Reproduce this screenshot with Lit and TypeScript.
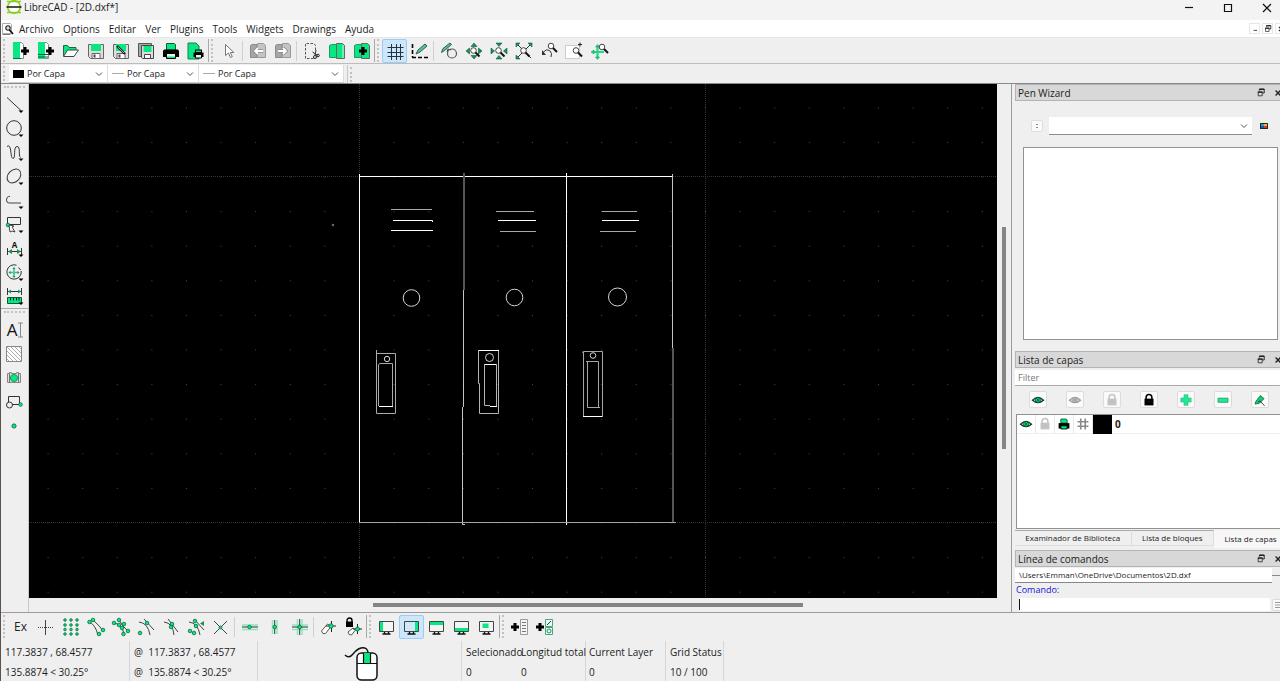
import { LitElement, html, svg, css, nothing } from "lit";
import { customElement, property } from "lit/decorators.js";
import { classMap } from "lit/directives/class-map.js";

const G = "#08e882";
const N = "#14925a";

const dot = (x: number, y: number, r = 1.8) =>
  svg`<circle cx=${x} cy=${y} r=${r} fill=${G} stroke="#0b6b40" stroke-width=".8"/>`;
const lens = (x: number, y: number) => svg`
  <circle cx=${x} cy=${y} r="2.8" fill="#fff" stroke="#444" stroke-width="1"/>
  <path d=${`M${x + 2} ${y + 2}l4 4`} stroke="#111" stroke-width="2"/>`;
const plus = (x: number, y: number) =>
  svg`<path d=${`M${x - 4} ${y}h8M${x} ${y - 4}v8`} stroke="#000" stroke-width="3"/>`;
const more = svg`<path d="M14.5 16.5h5l-2.5 2.6z" fill="#000"/>`;
const screen = (part: unknown) => svg`
  <path d="M2.5 4.500h14v10h-14z" fill="#f4f4f4" stroke="#444"/>${part}
  <path d="M7.500 15v2M11.500 15v2M5.500 17h8" stroke="#111" stroke-width="1.400"/>`;
const floppy = svg`
  <path d="M2.5 3.5h15v14h-13l-2-2z" fill="#ddd" stroke="#666"/>
  <path d="M5 3h10v7H5z" fill="${G}"/><path d="M6 12.5h8v5H6z" fill="#fff" stroke="#666"/>
  <path d="M7.5 13.5h2v3h-2z" fill="#444"/>`;
const printer = svg`
  <path d="M5.500 2.500h8l1 1V9h-9z" fill="${G}" stroke="#0b5c38"/>
  <path d="M3 8.500h14l1 1.500v6H2v-6z" fill="#000"/>
  <path d="M5.500 12.500h9v5h-9z" fill="#eee" stroke="#000"/><path d="M6 15.500h8v1.500H6z" fill="${G}"/>`;
const padlock = (c: string, hole: string) => svg`
  <path d="M6.8 9V7.2a3.2 3.2 0 0 1 6.4 0V9" fill="none" stroke=${c} stroke-width="1.7"/>
  <path d="M5 8.5h10V16H5z" fill=${c}/><path d="M7 12h6" stroke=${hole} stroke-width=".6"/>`;
const eye = (c: string, iris: string) => svg`
  <path d="M4 10.2Q10 4.4 16 10.2Q10 15.4 4 10.2z" fill="#fff" stroke=${c} stroke-width="1.6"/>
  <circle cx="10" cy="10" r="2.7" fill=${iris} stroke=${c} stroke-width="1"/><circle cx="10" cy="10" r="1" fill=${c}/>`;
const moveBlock = (d: string) => svg`
  <path d="M2.500 4.500l1.500-1h5v13h-6.500z" fill="#a6a6a6" stroke="#8c8c8c"/>
  <path d="M9.500 2.500h6l2 2v12h-8z" fill="#c4c4c4" stroke="#9a9a9a"/>
  <path d=${d} fill="none" stroke="#8a8a8a" stroke-width="3.400"/>
  <path d=${d} fill="none" stroke="#fff" stroke-width="1.800"/>`;

const ICONS: Record<string, unknown> = {
  newFile: svg`<path d="M2.500 1.500h8l2 2v14h-10z" fill="#fff" stroke="#888"/><path d="M2 1h7v17H2z" fill="${G}"/><path d="M2 17.500h8" stroke="#087544"/>${plus(14, 10)}`,
  newTemplate: svg`<path d="M2.500 1.500h8l2 2v14h-10z" fill="#fff" stroke="#888"/><path d="M2 1h7v17H2z" fill="${G}"/><path d="M2 13.500h10M2 16h10" stroke="#075c37"/>${plus(14, 10)}`,
  open: svg`<path d="M2.500 15V4.500h4l1.500 2h7v3" fill="${G}" stroke="#176b48"/><path d="M2.500 15.500l4-6.500h11l-4.500 6.500z" fill="#fff" stroke="#444"/>`,
  save: floppy,
  saveAs: svg`${floppy}<path d="M6 5l8 8" stroke="#222" stroke-width="2.400"/><path d="M7 6l6 6" stroke="#ddd" stroke-width=".7"/>`,
  saveAll: svg`<path d="M2.500 2.500h13v13h-13z" fill="#aaa" stroke="#555"/><path d="M5.500 4.500h12v13h-11l-1-1z" fill="#ddd" stroke="#444"/><path d="M7.500 5h8v6h-8z" fill="${G}"/><path d="M8.500 13.500h6v4h-6z" fill="#fff" stroke="#444"/>`,
  print: printer,
  preview: svg`<path d="M2 2h8l3 3v13H2z" fill="${G}" stroke="#1a7a50"/><path d="M9 8.500h7v3H9zM7.500 11.500h10V16h-10z" fill="#000"/><path d="M10 9.500h5v1.500h-5z" fill="${G}"/><path d="M9.500 13.500h6v3.500h-6z" fill="#eee" stroke="#000"/>`,
  pointer: svg`<path d="M6.500 3.500v11l3-2.500 2 4.500 1.800-.8-2-4.200h3.600z" fill="#fff" stroke="#777"/>`,
  prev: moveBlock("M15 10H7M10 7l-3 3 3 3"),
  next: moveBlock("M5 10h8M10 7l3 3-3 3"),
  cut: svg`<path d="M13.500 9V4.500l-1.500-2H3.500v15h8" fill="none" stroke="#555" stroke-dasharray="2.500 1.500"/><path d="M14 9l-1 5M10.500 11l5 3.500" stroke="#333"/><circle cx="13" cy="16" r="1.500" fill="none" stroke="#222"/><circle cx="16" cy="14.500" r="1.300" fill="none" stroke="#222"/>`,
  copy: svg`<path d="M2.500 4.500l2-1h5v13h-7z" fill="${G}" stroke="#1c9b62"/><path d="M9.500 2.500h6l2 2v13h-8z" fill="${G}" stroke="#666"/><path d="M16 4v13" stroke="#c9f9e2"/>`,
  paste: svg`<path d="M2.500 4.500l2-1h5v13h-7z" fill="${G}" stroke="#1c9b62"/><path d="M9.500 2.500h6l2 2v13h-8z" fill="${G}" stroke="#666"/>${plus(11, 10)}`,
  grid: svg`<path d="M2.500 6.500h16M2.500 11.500h16M2.500 15.500h16M6.500 3v16M11.500 3v16M15.500 3v16" stroke="#28323a"/>`,
  draft: svg`<path d="M2.500 3v13" stroke="#000" stroke-width="1.600" stroke-dasharray="4 2"/><path d="M2 16.500h16" stroke="#000" stroke-width="1.600" stroke-dasharray="4 2"/><path d="M6 13l2-4 7-6 2 2-7 6z" fill="#54c795" stroke="#355"/>`,
  redraw: svg`<path d="M2.500 11.500l1.500-4 7-5.500 1.500 1.500-7 6z" fill="#54c795" stroke="#355"/><circle cx="13" cy="12.500" r="4.500" fill="none" stroke="#555" stroke-width="1.200"/><path d="M8 11l1-3 3 1" fill="none" stroke="#444"/>`,
  zoomIn: svg`<path d="M7 5.500L10 2l3 3.500zM7 14.500l3 3.500 3-3.500zM5.500 7L2 10l3.500 3zM14.500 7l3.500 3-3.500 3z" fill="${N}" stroke="#0b5c38" stroke-width=".6"/>${lens(9.5, 9.5)}`,
  zoomOut: svg`<path d="M7 2l3 3.500L13 2zM7 18l3-3.500 3 3.500zM2 7l3.500 3L2 13zM18 7l-3.500 3 3.500 3z" fill="${N}" stroke="#0b5c38" stroke-width=".6"/>${lens(9.5, 9.5)}`,
  zoomAuto: svg`<path d="M3 3l14 14M17 3L3 17" stroke="#333"/><path d="M2 6V2h4zM18 6V2h-4zM2 14v4h4z" fill="${N}" stroke="#0b5c38" stroke-width=".6"/>${lens(9.5, 9.5)}`,
  zoomPrev: svg`<path d="M4 12Q7 7 11 10q2.500 2 1 6" fill="none" stroke="#333"/><path d="M3 9v5h4z" fill="#333"/>${lens(12, 5)}`,
  zoomWin: svg`<path d="M1.500 4.500h14v13h-14z" fill="#fff" stroke="#ccc"/><path d="M14 3.500h4M16 1.500v4" stroke="#222"/>${lens(12, 9.5)}`,
  pan: svg`<path d="M3 11h12M8.500 5v12" stroke="#22d884" stroke-width="2.200"/><path d="M6.500 6l2-2.500 2 2.500zM6.500 16l2 2.500 2-2.500zM5 9l-3 2 3 2z" fill="#22d884" stroke="${N}" stroke-width=".5"/>${lens(13, 6)}`,

  line: svg`<path d="M3 3.500L17.500 17" stroke="#333" fill="none"/>${more}`,
  circle: svg`<circle cx="10" cy="10" r="7.300" fill="none" stroke="#333"/>${more}`,
  curve: svg`<path d="M3 4.500c5-4 3 12 6 12s0-12 4-12 1 9 3.500 11" fill="none" stroke="#333"/>${more}`,
  ellipse: svg`<ellipse cx="10" cy="10" rx="7.800" ry="5.800" transform="rotate(-45 10 10)" fill="none" stroke="#333"/>${more}`,
  polyline: svg`<path d="M6 6.500H4.500Q2.500 7 2.500 10t2.500 3H17" fill="none" stroke="#444"/>${more}`,
  select: svg`<path d="M3.500 3.500h13v7h-13z" fill="none" stroke="#333"/>${dot(4, 11)}<path d="M5 11l1 7 2-1 3 1-3-5 2-1z" fill="#fff" stroke="#444"/>${more}`,
  dim: svg`<path d="M3.500 10v7M17.500 10v7M4 13.500h13" stroke="#333"/><path d="M8 11l-4 2.500 4 2.500zM13 11l4 2.500-4 2.500z" fill="${N}"/><text x="10.500" y="10" font-size="8" font-weight="700" text-anchor="middle" fill="#111">A</text>${more}`,
  rotate: svg`<path d="M12.500 3.200A7.200 7.200 0 1 0 17.200 9M14.500 5.500l2.200 2.500" fill="none" stroke="#333"/><path d="M5.500 10.500h9M10 6v9" stroke="#3dc98d" stroke-width="1.600"/><path d="M8.500 7l1.500-2 1.500 2zM8.500 14l1.500 2 1.500-2zM6.500 9l-2 1.500 2 1.500zM13.500 9l2 1.500-2 1.500z" fill="${N}"/>${more}`,
  measure: svg`<path d="M3.500 2v7M17.500 2v7M4 5.500h13" stroke="#333"/><path d="M7 3.500l-3 2 3 2zM14 3.500l3 2-3 2z" fill="${N}"/><path d="M3.500 11.500h14v6h-14z" fill="${G}" stroke="#14563a"/><path d="M6.500 12v2.500M9.500 12v2.500M12.500 12v2.500M15 12v2.500" stroke="#111"/>${more}`,
  text: svg`<path d="M14 3h5M16.500 3v14M14 17h5" stroke="#888" fill="none"/><text x="8" y="16" font-size="17" text-anchor="middle" fill="#111">A</text>`,
  hatch: svg`<path d="M2.500 2.500h15v15h-15z" fill="#fff" stroke="#888"/><path d="M3 3l14 14M7 3l10 10M11 3l6 6M15 3l2 2M3 7l10 10M3 11l6 6M3 15l2 2" stroke="#999" stroke-width=".8"/>`,
  image: svg`<path d="M3.500 5.500h2v-1h2v1h5v-1h2v1h2v9h-13z" fill="#ddd" stroke="#888"/><path d="M5.500 5v10M14.500 5v10" stroke="#777"/><circle cx="10" cy="10" r="3.600" fill="${G}" stroke="#139c60"/>`,
  block: svg`<path d="M4.500 10V4.500h11V11M8 12.500h7" fill="none" stroke="#333"/><circle cx="5.500" cy="13" r="3" fill="#eee" stroke="#333"/>${dot(16.5, 12.5)}`,
  point: svg`<circle cx="10" cy="10" r="2.100" fill="${G}" stroke="#0b7a48"/>`,

  free: svg`<path d="M9.500 3v15" stroke="#444"/><path d="M2 10.500h15" stroke="#444" stroke-dasharray="1 1"/>`,
  snapGrid: svg`${[4, 10, 16].map((x) => [3, 8, 12.5, 17].map((y) => dot(x, y, 1.3)))}`,
  snapEnd: svg`<path d="M3 5q6 2 9 13M7 3q7 6 10 11" fill="none" stroke="#444"/>${dot(3.5, 5)}${dot(7, 3)}${dot(13, 17)}${dot(17, 13)}`,
  snapOn: svg`<path d="M3 6q8 1 10 11M8 3q3 6 9 11" fill="none" stroke="#444"/>${dot(3, 6)}${dot(8, 3)}${dot(8, 8)}${dot(11, 11)}${dot(13, 7)}${dot(12.5, 17)}${dot(17, 14)}`,
  snapCenter: svg`<path d="M3 5q9 1 11 13M8 2l10 11" fill="none" stroke="#444"/>${dot(11, 6)}${dot(4, 16)}`,
  snapMid: svg`<path d="M3 5q9 1 10 13M7 2l10 13" fill="none" stroke="#444"/>${dot(11, 7)}${dot(10, 10)}`,
  snapDist: svg`<path d="M3 5q9 1 11 13M8 2l10 11" fill="none" stroke="#444"/>${dot(9, 4)}${dot(10, 9)}${dot(4, 14)}${dot(8, 16)}<path d="M18 4v5l-4-2.500z" fill="${N}"/>`,
  snapInt: svg`<path d="M3 4l13 13M16 4L3 17" stroke="#444"/>${dot(9.5, 10.5, 1.5)}`,
  restH: svg`<path d="M2 8h16M2 12.500h16" stroke="#8be8bd" stroke-width="1.500"/><path d="M2 10h16" stroke="#333"/>${dot(9.5, 10)}`,
  restV: svg`<path d="M7.500 3v14M12 3v14" stroke="#8be8bd" stroke-width="1.500"/><path d="M9.700 3v14" stroke="#333"/>${dot(9.7, 10)}`,
  restO: svg`<path d="M2 8h16M2 12.500h16M7.500 2v16M12 2v16" stroke="#8be8bd" stroke-width="1.500"/><path d="M2 10h16M9.700 2v16" stroke="#333"/>${dot(9.7, 10)}`,
  relZero: svg`<path d="M2.500 14l6-7 3.500 2.500-5.500 7q-3 1.500-4-2.500z" fill="#fff" stroke="#555"/><path d="M7 9h10M12.500 4v11" stroke="#222"/>${dot(12, 9, 2.2)}`,
  lockZero: svg`<path d="M3 5V3.500a2.500 2.500 0 0 1 5 0V5" fill="none" stroke="#000" stroke-width="1.400"/><path d="M2 4.500h7V10H2z" fill="#000"/><path d="M4 15l5-4 2.500 2-4 5q-3 .5-3.500-3z" fill="#fff" stroke="#555"/><path d="M9 12h9M13.500 7v10" stroke="#222"/>${dot(13.5, 12, 2)}`,
  dockL: screen(svg`<path d="M3 5h3v9H3z" fill="${G}"/>`),
  dockR: screen(svg`<path d="M3 5h10v9H3z" fill="#cfe8fb"/><path d="M13 5h3v9h-3z" fill="${G}"/>`),
  dockT: screen(svg`<path d="M3 5h13v3H3z" fill="${G}"/>`),
  dockB: screen(svg`<path d="M3 11h13v3H3z" fill="${G}"/>`),
  dockF: screen(svg`<path d="M5.500 6.500h6V11h-6z" fill="${G}"/>`),
  addMenu: svg`<path d="M10.500 2.500h7v15h-7z" fill="#f4f4f4" stroke="#999"/><path d="M12 5.500h4M12 8.500h4M12 11.500h4M12 14.500h4" stroke="#777"/>${plus(5, 10)}`,
  addTool: svg`<path d="M10.500 2.500h7v7h-7zM10.500 10.500h7v7h-7z" fill="#e8fff5" stroke="#4aa47c"/><path d="M12 8l4-4" stroke="#333"/><circle cx="14" cy="14" r="2" fill="none" stroke="${N}"/>${plus(5, 10)}`,

  eye: eye("#0c3f29", G),
  eyeGrey: eye("#9a9a9a", "#bbb"),
  lockGrey: padlock("#c4c4c4", "#bbb"),
  lock: padlock("#000", "#222"),
  add: svg`<path d="M4 10h12M10 4v12" stroke="#12a866" stroke-width="5"/><path d="M4.500 10h11M10 4.500v11" stroke="#24e891" stroke-width="4"/>`,
  remove: svg`<path d="M4.500 8h11v4.500h-11z" fill="#24e891" stroke="#12a866"/>`,
  edit: svg`<path d="M4.500 14.500l1-3 5-6.500 4 3.500-5 5z" fill="#18c878" stroke="#0c7447"/><path d="M8 12l2-1 5 5.500" stroke="#333" fill="none"/>`,
  print2: svg`<path d="M6.500 4.500h6l1 1V9h-7z" fill="${G}" stroke="#0b5c38"/><path d="M4 9h12v6H4z" fill="#000"/><path d="M6.500 12h7v3.500h-7z" fill="${G}" stroke="#000"/>`,
  hash: svg`<path d="M7.500 4v12M12.500 4v12M4 7.500h12M4 12.500h12" stroke="#8a8a8a" stroke-width="1.800"/>`,
  float: svg`<path d="M8 7V5h6v5h-2" fill="none" stroke="#222" stroke-width="1.200"/><path d="M8 5.500h6" stroke="#222" stroke-width="1.500"/><path d="M6.500 8.500h5v5h-5z" fill="none" stroke="#222"/><path d="M6 9h6" stroke="#222" stroke-width="1.500"/>`,
  close: svg`<path d="M7 7l6 6M13 7l-6 6" stroke="#222" stroke-width="1.700"/>`,
  palette: svg`<path d="M6 7h4v3H6z" fill="#19b67f"/><path d="M10 7h4v3h-4z" fill="#d8c82a"/><path d="M6 10h4v3H6z" fill="#2b45d4"/><path d="M10 10h4v3h-4z" fill="#d63a4a"/><path d="M6.500 7.500h7v5h-7z" fill="none" stroke="#222"/>`,
  stepper: svg`<path d="M9 8.500h2M9 11.500h2" stroke="#888"/>`,
  lines: svg`<path d="M7 7.500h7M7 10h7M7 12.500h7" stroke="#999"/>`,
  chevron: svg`<path d="M7 8.500l3 3 3-3" fill="none" stroke="#555"/>`,
  winMin: svg`<path d="M6 9.500h8" stroke="#111" stroke-width="1.200"/>`,
  winMax: svg`<path d="M6.500 6.500h7v7h-7z" fill="none" stroke="#111" stroke-width="1.200"/>`,
  winClose: svg`<path d="M6 6l8 8M14 6l-8 8" stroke="#111" stroke-width="1.200"/>`,
  subMin: svg`<path d="M8 12h5" stroke="#456" stroke-width="1.500"/>`,
  logo: svg`<circle cx="10" cy="8" r="6.300" fill="#fff" stroke="#86cf20" stroke-width="1.600"/><path d="M3 2.500h14M3 13.500h14" stroke="#86cf20" stroke-width="1.500"/><path d="M2.500 8h15" stroke="#222" stroke-width="1.600"/>`,
  doc: svg`<path d="M4.500 4.500h8l1 1v9h-9z" fill="#fff" stroke="#aaa"/><path d="M4.500 15.500h8" stroke="#777"/><circle cx="10" cy="9" r="2.200" fill="#ddd" stroke="#222" stroke-width="1.100"/><path d="M11.500 11l3.500 4" stroke="#111" stroke-width="1.800"/>`,
};

const icon = (name: string) =>
  svg`<svg class="icon" width="20" height="20" viewBox="0 0 20 20" aria-hidden="true">${ICONS[name]}</svg>`;

const base = css`
  *, *::before { box-sizing: border-box; }
  button, select, input {
    font: inherit; color: inherit; margin: 0; padding: 0; border: 0;
    background: none; outline: 0; border-radius: 0; min-width: 0;
  }
  .icon { display: block; flex: none; overflow: visible; }
`;

type Item = [icon: string, label: string];

@customElement("cad-toolbar")
class CadToolbar extends LitElement {
  @property({ attribute: false }) groups: Item[][][] = [];
  @property() active = "";
  @property({ type: Boolean, reflect: true }) vertical = false;

  static styles = [base, css`
    :host, .group { display: flex; align-items: center; }
    :host { align-items: flex-start; }
    :host([vertical]), :host([vertical]) .group { flex-direction: column; align-items: stretch; }
    .group { height: 25px; }
    :host([vertical]) .group { height: auto; }
    .handle { width: 7px; height: 23px; flex: none; padding: 0 2px; }
    .handle::before { content: ""; display: block; width: 2px; height: 100%; border-left: 2px dotted #c2c2c2; }
    .group + .group .handle { width: 8px; border-left: 1px solid #a9a9a9; }
    :host([vertical]) .handle { width: auto; height: 8px; padding: 2px 3px; }
    :host([vertical]) .handle::before { width: 100%; height: 2px; border-left: 0; border-top: 2px dotted #c2c2c2; }
    :host([vertical]) .group + .group .handle { width: auto; height: 10px; border-left: 0; border-top: 1px solid #a9a9a9; }
    .sep { width: 1px; height: 20px; background: #d0d0d0; margin: 0 2px 0 1px; }
    button { width: 25px; height: 24px; display: grid; place-items: center; border: 1px solid transparent; border-radius: 2px; }
    .on { background: #cce6fb; border-color: #9dccf0; }
    .word { font-size: 12px; color: #222; }
  `];

  render() {
    return this.groups.map((sections) => html`
      <div class="group" role="toolbar"><span class="handle"></span>
        ${sections.map((items, i) => html`${i ? html`<span class="sep"></span>` : nothing}
          ${items.map(([name, label]) => html`
            <button type="button" aria-label=${label} class=${classMap({ on: name === this.active })}>
              ${name === "Ex" ? html`<span class="word">Ex</span>` : icon(name)}
            </button>`)}`)}
      </div>`);
  }
}

@customElement("cad-canvas")
class CadCanvas extends LitElement {
  static styles = css`
    :host { display: block; background: #000; overflow: hidden; min-width: 0; min-height: 0; }
    svg { display: block; width: 100%; height: 100%; }
  `;

  render() {
    return html`<svg role="img" aria-label="2D.dxf">
      <defs>
        <pattern id="dots" x="330" y="92.500" width="34.600" height="34.600" patternUnits="userSpaceOnUse">
          <rect width="1" height="1" fill="#4c4c4c"/>
        </pattern>
      </defs>
      <rect width="100%" height="100%" fill="url(#dots)"/>
      <path d="M330.500 0V3000M676.500 0V3000M0 92.500H4000M0 438.500H4000" stroke="#363636" stroke-dasharray="1 1"/>
      <g transform="translate(-29 -84)" fill="none" stroke="#fff">
        <path d="M359.500 174V523M359 176.500H673M566.500 173V525"/>
        <path d="M672.500 174V348M463.500 290V407M462.500 407V524.500H465" stroke="#c4c4c4"/>
        <path d="M464 173V290M673 348V523" stroke="#565656" stroke-width="2"/>
        <path d="M359 522.500H676" stroke="#a5a5a5"/>
        <path d="M391 209.500H432M496 211.500H534M602 211.500H637M500 231.500H536M600 231.500H636" stroke="#a8a8a8"/>
        <path d="M393 220.500H432.500V222M391 230.500H433M498 220.500H536M602 220.500H639"/>
        <g stroke="#d4d4d4">
          <circle cx="411.500" cy="298" r="8.300"/>
          <circle cx="514.500" cy="297.500" r="8.300"/>
          <circle cx="617.500" cy="297" r="9"/>
          <circle cx="387" cy="359" r="2.700"/>
          <circle cx="489.500" cy="357.500" r="4"/>
          <circle cx="593" cy="355.500" r="2.800"/>
        </g>
        <path d="M376.500 350V413.500H395.500V353.500H376M378.500 406V364.500L380 363.500H392.500V406" stroke="#aaa"/>
        <path d="M379 406.500H393M479 350.500H499M484 364.500H497M490 406.500H497M583 416.500H603"/>
        <path d="M478.500 350V383.500H479.500V413.500H498.500V351M484.500 364V405.500H490M496.500 364V406" stroke="#b4b4b4"/>
        <path d="M582 352.500L583.500 351.500H602.500V417M583.500 352V416M586 361.500H598.500V408M587.500 362V407.500H600" stroke="#a6a6a6"/>
        <circle cx="333" cy="225" r=".8" stroke="#888"/>
      </g>
    </svg>`;
  }
}

const TOP: Item[][][] = [
  [[["newFile", "Nuevo"], ["newTemplate", "Nuevo desde plantilla"], ["open", "Abrir"], ["save", "Guardar"], ["saveAs", "Guardar como"], ["saveAll", "Guardar todo"], ["print", "Imprimir"], ["preview", "Vista previa"]]],
  [[["pointer", "Seleccionar"]], [["prev", "Deshacer"], ["next", "Rehacer"]], [["cut", "Cortar"], ["copy", "Copiar"], ["paste", "Pegar"]]],
  [[["grid", "Rejilla"], ["draft", "Borrador"]], [["redraw", "Redibujar"], ["zoomIn", "Acercar"], ["zoomOut", "Alejar"], ["zoomAuto", "Zoom automático"], ["zoomPrev", "Vista anterior"], ["zoomWin", "Zoom ventana"], ["pan", "Desplazar"]]],
];
const LEFT: Item[][][] = [
  [[["line", "Línea"], ["circle", "Círculo"], ["curve", "Curva"], ["ellipse", "Elipse"], ["polyline", "Polilínea"], ["select", "Seleccionar"], ["dim", "Cota"], ["rotate", "Modificar"], ["measure", "Medir"]]],
  [[["text", "Texto"], ["hatch", "Sombreado"], ["image", "Imagen"], ["block", "Bloque"], ["point", "Puntos"]]],
];
const BOTTOM: Item[][][] = [
  [[["Ex", "Exclusivo"], ["free", "Libre"], ["snapGrid", "Rejilla"], ["snapEnd", "Extremos"], ["snapOn", "En entidad"], ["snapCenter", "Centro"], ["snapMid", "Medio"], ["snapDist", "Distancia"], ["snapInt", "Intersección"]],
    [["restH", "Horizontal"], ["restV", "Vertical"], ["restO", "Ortogonal"]], [["relZero", "Cero relativo"], ["lockZero", "Bloquear cero"]]],
  [[["dockL", "Panel izquierdo"], ["dockR", "Panel derecho"], ["dockT", "Panel superior"], ["dockB", "Panel inferior"], ["dockF", "Panel flotante"]]],
  [[["addMenu", "Crear menú"], ["addTool", "Crear barra"]]],
];
const MENUS = ["Archivo", "Options", "Editar", "Ver", "Plugins", "Tools", "Widgets", "Drawings", "Ayuda"];
const LAYER_TOOLS: Item[] = [["eye", "Mostrar todo"], ["eyeGrey", "Ocultar todo"], ["lockGrey", "Desbloquear"], ["lock", "Bloquear"], ["add", "Añadir"], ["remove", "Quitar"], ["edit", "Editar"]];

@customElement("app-root")
class AppRoot extends LitElement {
  static styles = [base, css`
    :host {
      display: flex; flex-direction: column; height: 100vh; overflow: hidden;
      box-sizing: border-box; border-left: 1px solid #5a5350; background: #efefef; color: #1c1c1c;
      font: 10px/14px "Open Sans", "Noto Sans", sans-serif;
    }
    .title { flex: none; height: 20px; display: flex; background: #f3f3f3; padding-left: 3px; }
    .title .icon { margin-top: -1px; }
    .title .controls { margin-left: auto; display: flex; gap: 19px; padding-right: 3px; margin-top: -3px; }
    .menu { flex: none; height: 18px; display: flex; align-items: center; background: #fff; border-bottom: 1px solid #e8e8e8; }
    nav { display: flex; gap: 9px; margin-left: 1px; }
    .menu .icon { margin-left: -3px; }
    .sub { margin-left: auto; display: flex; gap: 2px; margin-right: -6px; }
    .sub button { width: 11px; height: 11px; display: grid; place-items: center; border: 1px solid #e6e6e6; }
    .sub .icon { width: 14px; height: 14px; margin: -3px; }
    .bar { flex: none; height: 26px; border-bottom: 1px solid #bdbdbd; }
    .pens { flex: none; height: 20px; display: flex; align-items: center; border-bottom: 1px solid #8a8a8a; font-size: 9px; }
    .grip { width: 3px; height: 15px; margin: 0 3px 0 2px; border-left: 2px dotted #c2c2c2; }
    .pens .end { border-left: 1px solid #c6c6c6; height: 18px; margin-left: 3px; }
    .pens .end .grip { margin-top: 2px; }
    .combo { display: flex; align-items: center; height: 18px; background: #fff; border-right: 1px solid #ddd; border-bottom: 1px solid #ccc; padding: 1px 0 0 4px; }
    .combo select { appearance: none; flex: 1; height: 16px; padding-left: 3px; }
    .combo .icon { margin-right: -2px; }
    .c1 { width: 99px; } .c2 { width: 91px; } .c3 { width: 145px; }
    .swatch { width: 11px; height: 8px; background: #000; }
    .dash { width: 12px; height: 1px; background: #aaa; }
    main { flex: 1; min-height: 0; display: flex; border-bottom: 1px solid #9c9c9c; }
    .tools { flex: none; width: 28px; border-right: 1px solid #c9c9c9; }
    .view { flex: 1; min-width: 0; display: grid; grid-template: minmax(0, 1fr) 14px / minmax(0, 1fr) 14px; border-right: 1px solid #9c9c9c; }
    .vs, .hs { display: grid; }
    .vs { grid-template-rows: 143fr 222fr 149fr; justify-content: center; }
    .hs { grid-template-columns: 344fr 430fr 194fr; align-content: center; }
    .thumb { background: #858585; min-width: 4px; min-height: 4px; }
    .vs .thumb { grid-row: 2; } .hs .thumb { grid-column: 2; }
    aside { flex: none; width: 268px; padding-left: 3px; display: flex; flex-direction: column; overflow: hidden; }
    h2 { flex: none; margin: 0; height: 17px; display: flex; align-items: center; padding-left: 2px; font: inherit; background: #d8d8d8; border: 1px solid #b4b4b4; border-right: 0; }
    h2 span { flex: 1; }
    h2 button { width: 17px; display: grid; place-items: center; }
    h2 button:last-child { margin-right: -6px; }
    h2 .icon { width: 16px; height: 16px; }
    .wizard { flex: 1; min-height: 0; display: flex; flex-direction: column; padding: 16px 2px 11px 8px; }
    .pick { display: flex; align-items: center; gap: 6px; padding: 0 8px; height: 18px; margin-bottom: 12px; }
    .pick .combo { flex: 1; height: 18px; border-right: 0; border-bottom-color: #8c8c8c; }
    .mini { flex: none; width: 12px; height: 12px; display: grid; place-items: center; background: #fafafa; border: 1px solid #ddd; border-radius: 2px; }
    .mini .icon { margin: -5px; }
    .plain { border-color: transparent; background: none; }
    .box { flex: 1; background: #fff; border: 1px solid #929292; min-height: 0; }
    .filter { flex: none; height: 16px; margin-top: 2px; padding-left: 3px; background: #fff; border-bottom: 1px solid #aaa; font-size: 9px; width: 100%; }
    .filter::placeholder { color: #777; opacity: 1; }
    .acts { flex: none; display: grid; grid-template-columns: repeat(7, 1fr); justify-items: center; padding: 5px 2px 6px 4px; }
    .acts button { width: 18px; height: 17px; display: grid; place-items: center; background: #fafafa; border: 1px solid #dcdcdc; border-radius: 2px; }
    .acts .icon { width: 18px; height: 18px; margin: -2px; }
    .layers { flex: none; height: 115px; background: #fff; border: 1px solid #929292; border-right: 0; margin-left: 1px; }
    table { border-spacing: 0; width: 100%; }
    td { height: 19px; padding: 0; border-right: 1px solid #e8e8e8; border-bottom: 1px solid #f0f0f0; width: 19px; }
    td .icon { width: 18px; height: 18px; }
    td.color { background: #000; border-color: #000; }
    td.name { width: auto; padding-left: 3px; font-weight: 700; border-right: 0; }
    .tabs { flex: none; display: flex; height: 18px; margin: 1px 0 2px; font-size: 8px; }
    .tabs button { padding: 0 9px; height: 16px; white-space: nowrap; border: 1px solid #ddd; border-top-color: #aaa; border-left: 0; flex: 1 0 auto; }
    .tabs .cur { border: 0; background: #f7f7f7; height: 18px; padding-right: 2px; }
    .log { flex: none; display: flex; align-items: center; height: 15px; padding-left: 4px; background: #fff; border-bottom: 1px solid #888; margin-top: 1px; font-size: 8px; }
    .log i { margin-left: auto; width: 8px; height: 15px; background: linear-gradient(#efefef 7px, #888 7px, #888 8px, #efefef 8px); }
    .cmd { flex: none; display: block; height: 14px; color: #1616d8; font-size: 9px; padding-left: 1px; }
    .entry { flex: none; display: flex; align-items: center; height: 15px; gap: 2px; padding-left: 2px; margin-right: -4px; }
    .entry input { flex: 1; height: 13px; background: #fff; border-left: 1px solid #eee; }
    .caret { flex: none; width: 1px; height: 11px; background: #111; margin: 0 -3px 0 2px; z-index: 1; }
    .snap { flex: none; height: 28px; padding-top: 1px; }
    footer { flex: none; height: 40px; display: flex; line-height: 20px; white-space: nowrap; }
    footer div { border-right: 1px solid #d6d6d6; padding: 1px 0 0 4px; }
    footer p { margin: 0; white-space: pre; }
    .w1 { width: 129px; } .w2 { width: 128px; } .w4 { width: 57px; } .w5 { width: 67px; } .w6 { width: 80px; } .w7 { width: 58px; }
    footer .w3 { width: 204px; padding-top: 0; display: grid; place-items: end center; }
    footer .w4 { border-right: 0; } footer .w5 { padding-left: 2px; } footer .w6 { padding-left: 3px; }
  `];

  private dockTitle(text: string) {
    return html`<h2><span>${text}</span>
      <button type="button" aria-label="Desacoplar">${icon("float")}</button>
      <button type="button" aria-label="Cerrar">${icon("close")}</button></h2>`;
  }

  private cell(cls: string, a: string, b: string) {
    return html`<div class=${cls}><p>${a}</p><p>${b}</p></div>`;
  }

  render() {
    return html`
      <header class="title">${icon("logo")}<span>LibreCAD - [2D.dxf*]</span>
        <span class="controls">
          <button type="button" aria-label="Minimizar">${icon("winMin")}</button>
          <button type="button" aria-label="Maximizar">${icon("winMax")}</button>
          <button type="button" aria-label="Cerrar">${icon("winClose")}</button>
        </span>
      </header>
      <div class="menu">${icon("doc")}
        <nav>${MENUS.map((m) => html`<button type="button">${m}</button>`)}</nav>
        <span class="sub">
          <button type="button" aria-label="Minimizar dibujo">${icon("subMin")}</button>
          <button type="button" aria-label="Restaurar dibujo">${icon("float")}</button>
          <button type="button" aria-label="Cerrar dibujo">${icon("close")}</button>
        </span>
      </div>
      <cad-toolbar class="bar" .groups=${TOP} active="grid"></cad-toolbar>
      <div class="pens">
        <span class="grip"></span>
        <div class="combo c1"><span class="swatch"></span><select aria-label="Color"><option>Por Capa</option></select>${icon("chevron")}</div>
        <div class="combo c2"><span class="dash"></span><select aria-label="Grosor"><option>Por Capa</option></select>${icon("chevron")}</div>
        <div class="combo c3"><span class="dash"></span><select aria-label="Tipo de línea"><option>Por Capa</option></select>${icon("chevron")}</div>
        <div class="end"><div class="grip"></div></div>
      </div>
      <main>
        <cad-toolbar class="tools" vertical .groups=${LEFT}></cad-toolbar>
        <section class="view">
          <cad-canvas></cad-canvas>
          <div class="vs"><div class="thumb"></div></div>
          <div class="hs"><div class="thumb"></div></div>
        </section>
        <aside>
          ${this.dockTitle("Pen Wizard")}
          <div class="wizard">
            <div class="pick">
              <button type="button" class="mini" aria-label="Favoritos">${icon("stepper")}</button>
              <div class="combo"><select aria-label="Color de pluma"></select>${icon("chevron")}</div>
              <button type="button" class="mini plain" aria-label="Elegir color">${icon("palette")}</button>
            </div>
            <div class="box"></div>
          </div>
          ${this.dockTitle("Lista de capas")}
          <input class="filter" placeholder="Filter" aria-label="Filter" />
          <div class="acts">${LAYER_TOOLS.map(([n, l]) => html`<button type="button" aria-label=${l}>${icon(n)}</button>`)}</div>
          <div class="layers">
            <table><tbody><tr>
              <td>${icon("eye")}</td><td>${icon("lockGrey")}</td><td>${icon("print2")}</td><td>${icon("hash")}</td>
              <td class="color"></td><td class="name">0</td>
            </tr></tbody></table>
          </div>
          <div class="tabs" role="tablist">
            <button type="button" role="tab">Examinador de Biblioteca</button>
            <button type="button" role="tab">Lista de bloques</button>
            <button type="button" role="tab" class="cur" aria-selected="true">Lista de capas</button>
          </div>
          ${this.dockTitle("Línea de comandos")}
          <div class="log"><span>\\Users\\Emman\\OneDrive\\Documentos\\2D.dxf</span><i></i></div>
          <label class="cmd" for="cmd">Comando:</label>
          <div class="entry"><span class="caret"></span><input id="cmd" />
            <button type="button" class="mini" aria-label="Opciones">${icon("lines")}</button></div>
        </aside>
      </main>
      <cad-toolbar class="snap" .groups=${BOTTOM} active="dockR"></cad-toolbar>
      <footer>
        ${this.cell("w1", "117.3837 , 68.4577", "135.8874 < 30.25°")}
        ${this.cell("w2", "@  117.3837 , 68.4577", "@  135.8874 < 30.25°")}
        <div class="w3">
          <svg class="icon" width="36" height="37" viewBox="0 0 36 37" aria-hidden="true">
            <path d="M1 11q4 4 8-1t8-6q7-1 7 5" fill="none" stroke="#111" stroke-width="1.500"/>
            <rect x="13" y="9" width="20" height="27" rx="4.500" fill="#fff" stroke="#111" stroke-width="1.500"/>
            <path d="M20 9h6v10h-6z" fill="${G}"/>
            <path d="M13 19.500h20M19.500 9v10M26.500 9v10" stroke="#111" stroke-width="1.200"/>
          </svg>
        </div>
        ${this.cell("w4", "Selecionado", "0")}
        ${this.cell("w5", "Longitud total", "0")}
        ${this.cell("w6", "Current Layer", "0")}
        ${this.cell("w7", "Grid Status", "10 / 100")}
      </footer>`;
  }
}
